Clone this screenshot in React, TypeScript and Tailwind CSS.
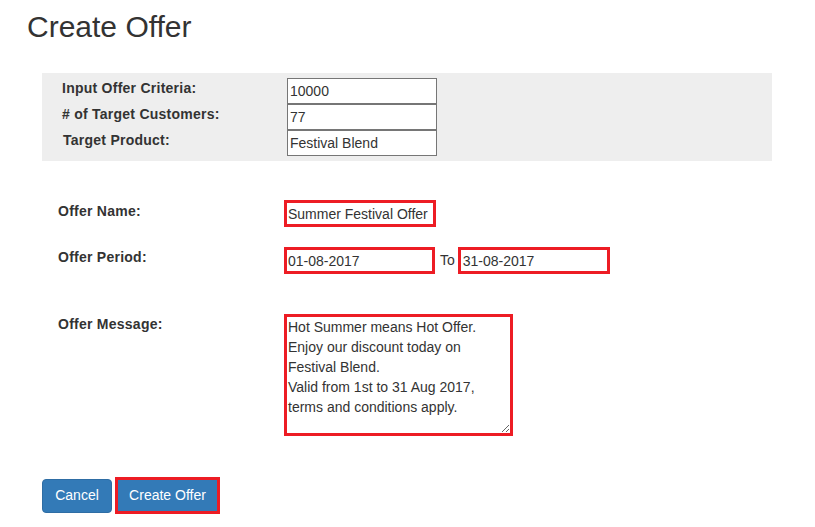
import React from "react";

const criteria = [
  { label: "Input Offer Criteria:", value: "10000", nudge: "" },
  { label: "# of Target Customers:", value: "77", nudge: "" },
  { label: "Target Product:", value: "Festival Blend", nudge: "pl-px" },
];

const offerMessage =
  "Hot Summer means Hot Offer.\nEnjoy our discount today on\nFestival Blend.\nValid from 1st to 31 Aug 2017,\nterms and conditions apply.";

const redBox = "border-[3px] border-[#ed1c24] bg-white outline-none";

const App = () => {
  return (
    <div className="min-h-screen bg-white pt-[10px] text-[14px] text-[#333] font-['Liberation_Sans',Arial,sans-serif]">
      <h1 className="ml-[27px] text-[30px] leading-[33px] font-normal">Create Offer</h1>

      <div className="ml-[42px] w-[730px]">
        {/* criteria panel */}
        <div className="mt-[30px] bg-[#eeeeee] pt-[5px] pb-[5px] pl-[20px]">
          {criteria.map((row) => (
            <div key={row.label} className="flex items-start">
              <div className={`w-[225px] font-bold leading-5 tracking-[0.25px] ${row.nudge}`}>{row.label}</div>
              <input
                defaultValue={row.value}
                className="h-[26px] w-[150px] border border-[#767676] bg-white px-[2px] text-[14px] text-[#333] outline-none"
              />
            </div>
          ))}
        </div>

        {/* offer form */}
        <div className="pl-[16px]">
          <div className="mt-[39px] flex items-start">
            <div className="w-[226px] pt-px font-bold leading-5 tracking-[0.25px]">Offer Name:</div>
            <input
              defaultValue="Summer Festival Offer"
              className={`h-[27px] w-[152px] pl-px text-[14px] text-[#333] ${redBox}`}
            />
          </div>

          <div className="mt-[20px] flex items-start">
            <div className="w-[226px] font-bold leading-5 tracking-[0.25px]">Offer Period:</div>
            <div className="flex items-center">
              <input
                defaultValue="01-08-2017"
                className={`h-[27px] w-[151px] pl-px text-[14px] text-[#333] ${redBox}`}
              />
              <span className="ml-[5px] mr-[3px]">To</span>
              <input
                defaultValue="31-08-2017"
                className={`h-[27px] w-[152px] pl-[2px] text-[14px] text-[#333] ${redBox}`}
              />
            </div>
          </div>

          <div className="mt-[40px] flex items-start">
            <div className="w-[226px] font-bold leading-5 tracking-[0.25px]">Offer Message:</div>
            <textarea
              defaultValue={offerMessage}
              className={`h-[122px] w-[229px] pl-px pt-0 text-[14px] leading-5 text-[#333] ${redBox}`}
            />
          </div>
        </div>

        {/* actions */}
        <div className="mt-[41px] flex items-center gap-[3px]">
          <button className="h-[34px] w-[70px] rounded-[4px] border border-[#2e6da4] bg-[#337ab7] text-[14px] text-white">
            Cancel
          </button>
          <button className="h-[37px] w-[105px] border-[3px] border-[#ed1c24] bg-[#337ab7] text-[14px] text-white">
            Create Offer
          </button>
        </div>
      </div>
    </div>
  );
};

export default App;
